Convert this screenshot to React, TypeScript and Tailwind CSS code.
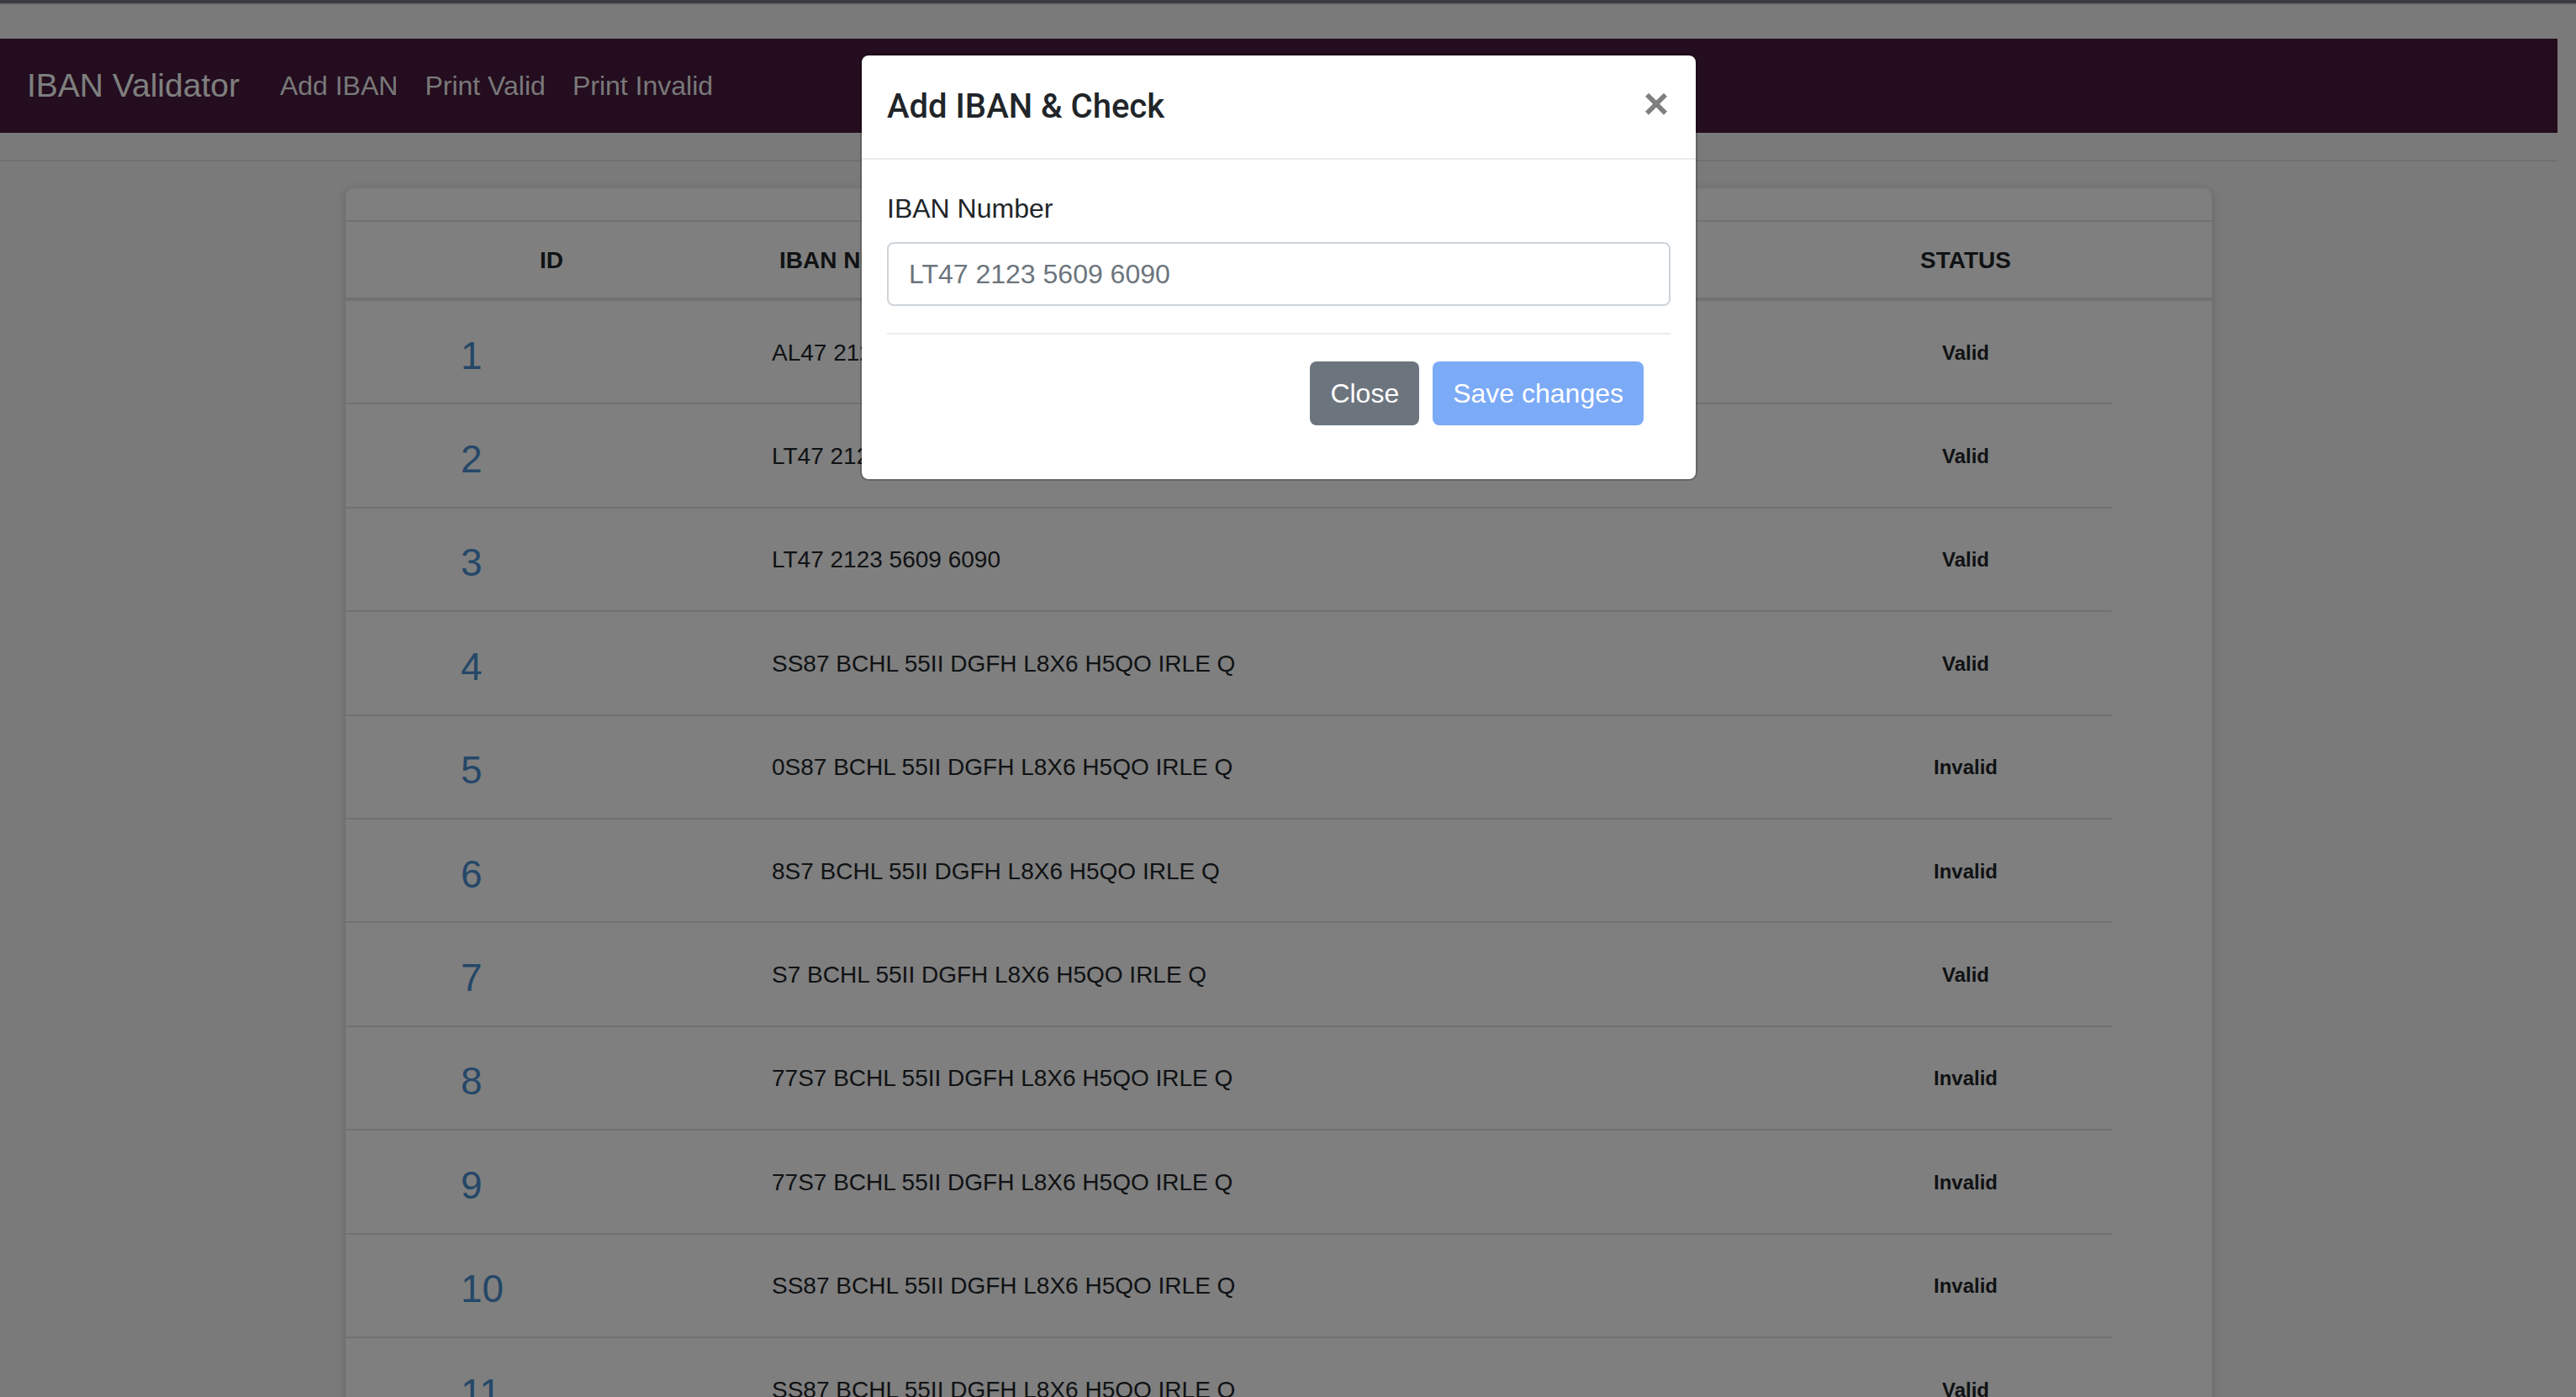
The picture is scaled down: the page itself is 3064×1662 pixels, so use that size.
import React from "react";

type Row = { id: number; iban: string; status: "Valid" | "Invalid" };

const rows: Row[] = [
  { id: 1, iban: "AL47 2121 1009 0000 0002 3569 8741", status: "Valid" },
  { id: 2, iban: "LT47 2123 5609 6090", status: "Valid" },
  { id: 3, iban: "LT47 2123 5609 6090", status: "Valid" },
  { id: 4, iban: "SS87 BCHL 55II DGFH L8X6 H5QO IRLE Q", status: "Valid" },
  { id: 5, iban: "0S87 BCHL 55II DGFH L8X6 H5QO IRLE Q", status: "Invalid" },
  { id: 6, iban: "8S7 BCHL 55II DGFH L8X6 H5QO IRLE Q", status: "Invalid" },
  { id: 7, iban: "S7 BCHL 55II DGFH L8X6 H5QO IRLE Q", status: "Valid" },
  { id: 8, iban: "77S7 BCHL 55II DGFH L8X6 H5QO IRLE Q", status: "Invalid" },
  { id: 9, iban: "77S7 BCHL 55II DGFH L8X6 H5QO IRLE Q", status: "Invalid" },
  { id: 10, iban: "SS87 BCHL 55II DGFH L8X6 H5QO IRLE Q", status: "Invalid" },
  { id: 11, iban: "SS87 BCHL 55II DGFH L8X6 H5QO IRLE Q", status: "Valid" },
  { id: 12, iban: "SS87 BCHL 55II DGFH L8X6 H5QO IRLE Q", status: "Valid" },
];

export default function App() {
  return (
    <div className="relative h-[1662px] w-[3064px] overflow-hidden bg-[#f4f4f4] font-['Liberation_Sans',Arial,sans-serif] text-[#212529]">
      <div className="h-[4px] bg-[#74767e]" />
      <div className="h-[2px] bg-[#dadada]" />
      <div className="w-[3042px] pt-[40px]">
        <nav className="flex h-[112px] items-center bg-[#461a3c] px-[32px]">
          <span className="mr-[32px] text-[39px] leading-[60px] text-white">IBAN Validator</span>
          <a className="px-[16px] text-[32px] leading-[48px] text-white/95">Add IBAN</a>
          <a className="px-[16px] text-[32px] leading-[48px] text-white/95">Print Valid</a>
          <a className="px-[16px] text-[32px] leading-[48px] text-white/95">Print Invalid</a>
        </nav>
        <div className="h-[32px]" />
        <div className="h-[2px] bg-[#e0e0e0]" />
        <div className="ml-[411px] mt-[32px] w-[2220px] rounded-[10px] bg-white shadow-[0_2px_12px_rgba(0,0,0,0.18)]">
          <div className="h-[40px] border-b-2 border-[#e4e4e4]" />
          <div className="grid h-[94px] grid-cols-[490px_1fr_586px] items-center border-b-4 border-[#dee2e6] pt-[2px] text-[28px] font-bold uppercase">
            <div className="text-center">ID</div>
            <div className="pl-[26px]">IBAN Number</div>
            <div className="text-center">Status</div>
          </div>
          {rows.map((r) => (
            <div
              key={r.id}
              className="grid h-[123.4px] w-[2101px] grid-cols-[507px_1fr_348px] items-center border-b-2 border-[#e2e2e2]"
            >
              <div className="pl-[137px] pt-[8px] text-[46px] leading-none text-[#4a8fd0]">{r.id}</div>
              <div className="pt-[2px] text-[28px] leading-[42px]">{r.iban}</div>
              <div className="pt-[2px] text-center text-[24px] font-bold leading-[36px]">{r.status}</div>
            </div>
          ))}
        </div>
      </div>

      <div className="absolute inset-0 bg-black/50" />

      <div className="absolute left-[1023px] top-[64px] w-[996px] rounded-[10px] border-2 border-black/20 bg-white bg-clip-padding">
        <div className="flex items-center justify-between border-b-2 border-[#e9ecef] px-[30px] py-[31px]">
          <h5 className="font-['Roboto',sans-serif] text-[40px] font-medium leading-[60px] text-[#212529]">Add IBAN &amp; Check</h5>
          <span className="-mt-[8px] mr-[2px] text-[52px] font-bold leading-none text-black/50">×</span>
        </div>
        <div className="px-[30px] pb-[32px] pt-[34px]">
          <label className="mb-[16px] block text-[32px] leading-[48px]">IBAN Number</label>
          <div className="flex h-[76px] items-center rounded-[8px] border-2 border-[#ced4da] px-[24px] text-[32px] text-[#6c757d]">
            LT47 2123 5609 6090
          </div>
          <div className="mt-[32px] flex justify-end gap-[16px] border-t-2 border-[#e9ecef] px-[32px] pb-[32px] pt-[32px]">
            <button className="h-[76px] rounded-[8px] bg-[#6c757d] px-[24px] text-[32px] text-white">Close</button>
            <button className="h-[76px] rounded-[8px] bg-[#7baaf7] px-[24px] text-[32px] text-white">Save changes</button>
          </div>
        </div>
      </div>
    </div>
  );
}
